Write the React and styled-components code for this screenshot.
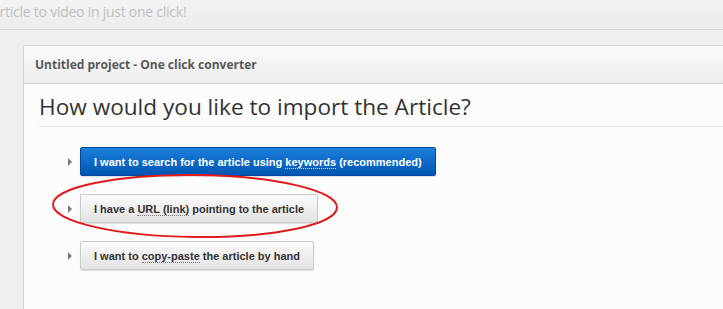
import React from "react";
import styled, { createGlobalStyle } from "styled-components";

const GlobalStyle = createGlobalStyle`
  html, body {
    margin: 0;
    padding: 0;
    height: 100%;
    overflow: hidden;
    background: #efefef;
  }
  #root {
    height: 100%;
  }
`;

const Page = styled.div`
  height: 100%;
  display: flex;
  flex-direction: column;
  font-family: "Open Sans", "Liberation Sans", sans-serif;
`;

const TopBar = styled.div`
  height: 29px;
  flex: none;
  border-bottom: 1px solid #d7d7d7;
  background: linear-gradient(#f3f3f3, #ececec);
  overflow: hidden;
  display: flex;
  align-items: center;
`;

const Tagline = styled.p`
  margin: -6px 0 0 -9px;
  font-size: 14px;
  letter-spacing: -0.25px;
  color: #c0c0c0;
  white-space: nowrap;
`;

const Main = styled.div`
  flex: 1;
  padding: 15px 0 0 23px;
  display: flex;
`;

const Panel = styled.section`
  flex: 1;
  border: 1px solid #d6d6d6;
  border-right: 0;
  border-bottom: 0;
  border-radius: 3px 0 0 0;
  background: #fcfcfc;
  display: flex;
  flex-direction: column;
`;

const PanelHeader = styled.div`
  height: 37px;
  border-bottom: 1px solid #d2d2d2;
  background: linear-gradient(#fbfbfb, #ececec);
  padding-left: 11px;
  display: flex;
  align-items: center;
  font-size: 12px;
  font-weight: 700;
  color: #585858;
`;

const Body = styled.div`
  padding-left: 15px;
`;

const Heading = styled.h2`
  margin: 8px 0 0;
  padding-bottom: 5px;
  border-bottom: 1px solid #e6e6e6;
  font-size: 22.6px;
  font-weight: 400;
  color: #333;
  line-height: 29px;
`;

const OptionList = styled.ul`
  list-style: none;
  margin: 20px 0 0 29px;
  padding: 0;
  display: flex;
  flex-direction: column;
  gap: 18px;
`;

const OptionRow = styled.li`
  position: relative;
  display: flex;
  align-items: center;
  gap: 8px;
`;

const Arrow = styled.span`
  width: 0;
  height: 0;
  border-top: 4px solid transparent;
  border-bottom: 4px solid transparent;
  border-left: 4px solid #7a7a7a;
`;

const Button = styled.button`
  height: 29px;
  padding: 0 13px;
  border-radius: 2px;
  font-family: "Liberation Sans", Arial, sans-serif;
  font-size: 11px;
  font-weight: 700;
  cursor: pointer;
  border: 1px solid ${(p) => (p.$primary ? "#0048a2" : "#cacaca")};
  background: ${(p) =>
    p.$primary
      ? "linear-gradient(#1c80dc, #0055b2)"
      : "linear-gradient(#fafafa, #e3e3e3)"};
  color: ${(p) => (p.$primary ? "#fff" : "#333")};
  box-shadow: 0 1px 1px rgba(0, 0, 0, 0.12);
  white-space: nowrap;
`;

const Term = styled.span`
  border-bottom: 1px dotted ${(p) => (p.$light ? "#d0e4ff" : "#777")};
`;

const Circle = styled.svg`
  position: absolute;
  left: -16px;
  top: -20px;
  pointer-events: none;
  overflow: visible;
`;

export default function App() {
  return (
    <Page>
      <GlobalStyle />
      <TopBar>
        <Tagline>Article to video in just one click!</Tagline>
      </TopBar>
      <Main>
        <Panel>
          <PanelHeader>Untitled project - One click converter</PanelHeader>
          <Body>
            <Heading>How would you like to import the Article?</Heading>
            <OptionList>
              <OptionRow>
                <Arrow />
                <Button $primary>
                  I want to search for the article using{" "}
                  <Term $light>keywords</Term> (recommended)
                </Button>
              </OptionRow>
              <OptionRow>
                <Arrow />
                <Button>
                  I have a <Term>URL (link)</Term> pointing to the article
                </Button>
                <Circle width="288" height="66" viewBox="0 0 288 66">
                  <ellipse
                    cx="143"
                    cy="32"
                    rx="142"
                    ry="31"
                    fill="none"
                    stroke="#de1a1a"
                    strokeWidth="2"
                    transform="rotate(0.6 143 32)"
                  />
                </Circle>
              </OptionRow>
              <OptionRow>
                <Arrow />
                <Button>
                  I want to <Term>copy-paste</Term> the article by hand
                </Button>
              </OptionRow>
            </OptionList>
          </Body>
        </Panel>
      </Main>
    </Page>
  );
}
